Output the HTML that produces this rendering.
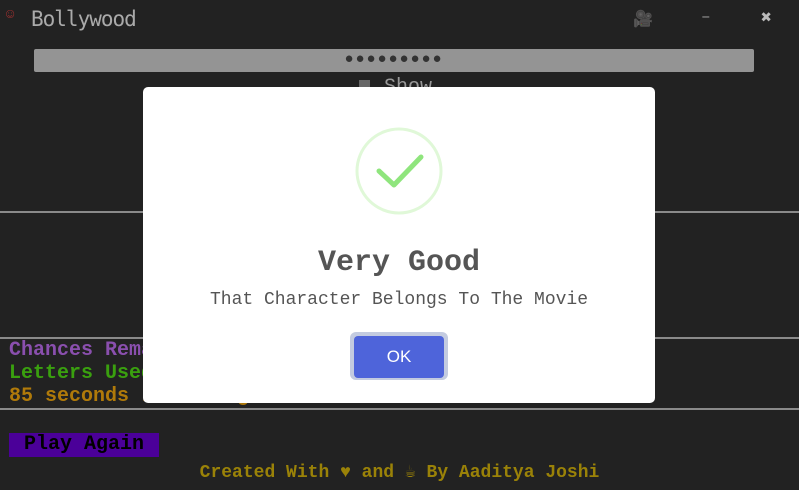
<!DOCTYPE html>
<html><head><meta charset="utf-8"><style>
html,body{margin:0;padding:0;width:799px;height:490px;overflow:hidden;background:#222;font-family:"Liberation Mono",monospace;position:relative}
.abs{position:absolute}
.hr{position:absolute;left:0;width:799px;height:2px;background:#8a8a8a}
.modal{position:absolute;left:143px;top:87px;width:512px;height:316px;background:#fff;border-radius:5px}
</style></head><body>
<div class="abs" style="left:6px;top:7px;font-size:14px;color:#b33">&#9786;</div>
<div class="abs" style="left:31px;top:7px;font-size:21px;color:#aaa;font-family:'DejaVu Sans Mono',monospace;letter-spacing:-1px">Bollywood</div>
<div class="abs" style="left:633px;top:9px;font-size:16px;color:#555">&#127909;</div>
<div class="abs" style="left:701px;top:8px;font-size:16px;color:#999">–</div>
<div class="abs" style="left:761px;top:7px;font-size:18px;color:#bbb;font-weight:bold">✖</div>
<div class="abs" style="left:34px;top:49px;width:720px;height:23px;background:#949494;border-radius:2px;text-align:center;line-height:22px;color:#333;font-size:15px;letter-spacing:2px">●●●●●●●●●</div>
<div class="abs" style="left:359px;top:80px;width:11px;height:10px;background:#666"></div>
<div class="abs" style="left:384px;top:76px;font-size:20px;color:#999">Show</div>
<div class="hr" style="top:211px"></div>
<div class="hr" style="top:337px"></div>
<div class="hr" style="top:408px"></div>
<div class="abs" style="left:9px;top:339px;font-size:20px;font-weight:bold;color:#8a4fae;line-height:23px">Chances Remaining</div>
<div class="abs" style="left:9px;top:362px;font-size:20px;font-weight:bold;color:#3aa00f;line-height:23px">Letters Used</div>
<div class="abs" style="left:9px;top:385px;font-size:20px;font-weight:bold;color:#b07a0a;line-height:23px">85 seconds remaining</div>
<div class="abs" style="left:9px;top:433px;width:150px;height:24px;background:#4b0099;color:#000;font-size:20px;font-weight:bold;text-align:center;line-height:24px">Play Again</div>
<div class="abs" style="left:0;top:461px;width:799px;text-align:center;font-size:18px;font-weight:bold;color:#9a8208">Created With ♥ and ☕ By Aaditya Joshi</div>
<div class="modal">
<svg class="abs" style="left:211px;top:39px" width="90" height="90" viewBox="0 0 90 90"><circle cx="45" cy="45" r="42" fill="none" stroke="#e0f8d8" stroke-width="3"/><path d="M25 45 L40 59 L67 31" fill="none" stroke="#8fe57d" stroke-width="5" stroke-linecap="round" stroke-linejoin="round"/></svg>
<div class="abs" style="left:0;top:159px;width:512px;text-align:center;font-size:30px;font-weight:bold;color:#555">Very Good</div>
<div class="abs" style="left:0;top:203px;width:512px;text-align:center;font-size:18px;color:#555">That Character Belongs To The Movie</div>
<div class="abs" style="left:207px;top:245px;width:98px;height:48px;border-radius:6px;background:#c3cbe0"></div>
<div class="abs" style="left:211px;top:249px;height:42px;border-radius:4px;background:#4e64da;color:#fff;font-family:'Liberation Sans',sans-serif;font-size:17px;text-align:center;line-height:42px;width:90px">OK</div>
</div>
</body></html>
